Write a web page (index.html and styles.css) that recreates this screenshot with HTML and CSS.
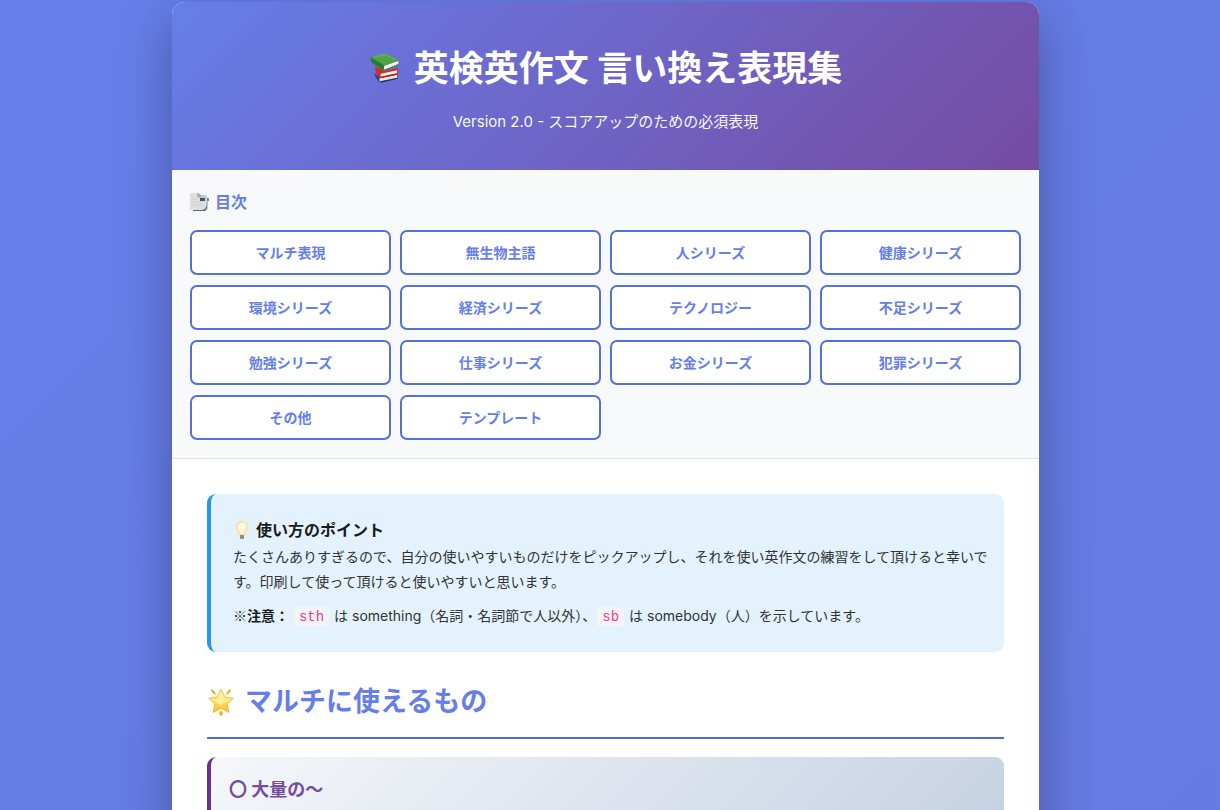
FILE: index.html
```html
<!DOCTYPE html>
<html lang="ja">
<head>
  <meta charset="UTF-8">
  <meta name="viewport" content="width=device-width, initial-scale=1.0">
  <title>英検英作文 言い換え表現集</title>
  <link rel="stylesheet" href="styles.css">
</head>
<body>
  <div class="container">
    <header class="header">
      <h1>
        <svg class="icon-books" viewBox="15 18 96 96" aria-hidden="true">
          <path d="M31 80l16 14 53-10v14l-51 11q-7-2-10-9-7-8-8-20z" fill="#363c8d"/>
          <path d="M48 96l51-10v10l-51 11q-4-6 0-11z" fill="#e9e4dc"/>
          <path d="M48 106l53-11v3l-50 12z" fill="#2a2d70"/>
          <path d="M33 61l28 15 40-11v21l-50 10q-6-1-11-9-7-12-7-26z" fill="#d52b1e"/>
          <path d="M51 83l48-10v9l-48 10q-4-4 0-9z" fill="#f4eee6"/>
          <path d="M51 92l50-10v3l-50 11z" fill="#a51c14"/>
          <path d="M21 34q-2 10 3 16l36 24 3-17z" fill="#2c7a2c"/>
          <path d="M61 59l42-14v9L62 71q-5-5-1-12z" fill="#f6f5ee"/>
          <path d="M61 71l43-17v3L62 75z" fill="#2b8b2b"/>
          <path d="M21 34l41-12 44 20-44 17z" fill="#4fa546"/>
          <path d="M28 35l34-10 33 16" fill="none" stroke="#72c45f" stroke-width="2"/>
        </svg>
        英検英作文 言い換え表現集
      </h1>
      <p>Version 2.0 - スコアアップのための必須表現</p>
    </header>

    <nav class="toc">
      <h2>
        <svg class="icon-tabs" viewBox="0 0 20 20" aria-hidden="true">
          <path d="M4 3h12l2 3v11l-2 2H4z" fill="#c9cbcd"/>
          <path d="M17 6h2v3h-2z" fill="#4b93e0"/>
          <path d="M17 10h1v3h-1z" fill="#8bbbe8"/>
          <path d="M0 1h8l2 4 6 2v7l-2 4H0z" fill="#dedfe0"/>
          <path d="M7 1l3 1 2 4-5-1z" fill="#aaadb0"/>
          <path d="M10 6h5v3h-5z" fill="#4e5356"/>
          <path d="M2 7h5M2 10h7M2 13h10" stroke="#cdcfd0" fill="none"/>
          <path d="M3 19h12l2-3v-4l-1 4-3 2H3z" fill="#606468"/>
        </svg>
        目次
      </h2>
      <div class="toc-grid">
        <a href="#multi">マルチ表現</a>
        <a href="#inanimate">無生物主語</a>
        <a href="#people">人シリーズ</a>
        <a href="#health">健康シリーズ</a>
        <a href="#environment">環境シリーズ</a>
        <a href="#economy">経済シリーズ</a>
        <a href="#technology">テクノロジー</a>
        <a href="#lack">不足シリーズ</a>
        <a href="#study">勉強シリーズ</a>
        <a href="#work">仕事シリーズ</a>
        <a href="#money">お金シリーズ</a>
        <a href="#crime">犯罪シリーズ</a>
        <a href="#others">その他</a>
        <a href="#template">テンプレート</a>
      </div>
    </nav>

    <main class="content">
      <div class="info-box">
        <h3>
          <svg class="icon-bulb" viewBox="0 0 18 20" aria-hidden="true">
            <path d="M9 1C5 1 3 4 3 7c0 3 2 5 3 8h6c1-3 3-5 3-8 0-3-2-6-6-6z" fill="#fbe9a9" stroke="#e6dcbc" stroke-width=".6"/>
            <path d="M9 3C6 3 5 5 5 7s2 4 3 6h2c1-2 3-4 3-6s-1-4-4-4z" fill="#fffbe2"/>
            <path d="M7 15h4v3l-1 1H8l-1-1z" fill="#aaa59b"/>
            <path d="M7 16h4M7 18h4" stroke="#6d6b68" stroke-width=".8"/>
          </svg>
          使い方のポイント
        </h3>
        <p>たくさんありすぎるので、自分の使いやすいものだけをピックアップし、それを使い英作文の練習をして頂けると幸いです。印刷して使って頂けると使いやすいと思います。</p>
        <p class="note"><span class="mark">※</span><strong>注意：</strong> <code>sth</code> は something（名詞・名詞節で人以外）、<code>sb</code> は somebody（人）を示しています。</p>
      </div>

      <section id="multi">
        <h2 class="section-title">
          <svg class="icon-star" viewBox="0 0 28 28" aria-hidden="true">
            <defs>
              <linearGradient id="gold" x1="0" y1="0" x2="0" y2="1">
                <stop offset="0" stop-color="#fff2a0"/>
                <stop offset=".5" stop-color="#ffe45c"/>
                <stop offset="1" stop-color="#f7b52c"/>
              </linearGradient>
            </defs>
            <path d="M14 1l3.900 8 8.600 1.200-6.300 5.900 1.800 8.400L14 20.400l-8 4.100 1.800-8.400-6.300-5.900L10.100 9z" fill="url(#gold)" stroke="#f0b437" stroke-width=".8" stroke-linejoin="round"/>
            <path d="M14 4l2 7 7 1-6 3-3 3-3-3-6-3 7-1z" fill="#fffac8" opacity=".6"/>
            <path d="M4 1q4 1 5 6-5-2-5-6zM24 1q-4 1-5 6 5-2 5-6zM14 22.500q4 3 0 5.500-4-2.500 0-5.500z" fill="#f2b02c"/>
          </svg>
          マルチに使えるもの
        </h2>
        <div class="card">
          <h3>〇 大量の〜</h3>
        </div>
      </section>
    </main>
  </div>
</body>
</html>
```
FILE: styles.css
```css
* {
  margin: 0;
  padding: 0;
  box-sizing: border-box;
}

body {
  font-family: Inter, "Noto Sans CJK JP", sans-serif;
  font-size: 14px;
  line-height: 25px;
  color: #333;
  background: linear-gradient(135deg, #667eea 0%, #667ae2 100%);
  padding: 2px 9px 0 0;
}

svg {
  flex: none;
}

.container {
  max-width: 867px;
  margin: 0 auto;
  background: #fff;
  border-radius: 13px 13px 0 0;
  box-shadow: 0 17px 52px rgba(0, 0, 0, 0.3);
  overflow: hidden;
}

.header {
  background: linear-gradient(135deg, #667eea 0%, #764ba2 100%);
  color: #fff;
  padding: 35px;
  text-align: center;
}

.header h1 {
  display: flex;
  justify-content: center;
  align-items: center;
  gap: 13px;
  font-size: 35px;
  line-height: 62px;
  margin-bottom: 9px;
}

.header p {
  font-size: 15px;
  line-height: 27px;
  opacity: 0.95;
}

.icon-books {
  width: 32px;
  height: 32px;
}

.toc {
  background: #f8f9fb;
  padding: 18px;
  border-bottom: 1px solid #dee2e6;
}

.toc h2 {
  display: flex;
  align-items: center;
  gap: 5px;
  color: #667eea;
  font-size: 16px;
  line-height: 28px;
  margin-bottom: 14px;
}

.icon-tabs {
  width: 20px;
  height: 20px;
}

.toc-grid {
  display: grid;
  grid-template-columns: repeat(auto-fit, minmax(174px, 1fr));
  gap: 10px 9px;
}

.toc-grid a {
  padding: 8px;
  background: #fff;
  border: 2px solid #5570d8;
  border-radius: 7px;
  color: #667eea;
  font-weight: bold;
  text-align: center;
  text-decoration: none;
}

.toc-grid a:hover {
  background: #667eea;
  color: #fff;
}

.content {
  padding: 35px;
}

.info-box {
  background: #e3f2fd;
  border-left: 4px solid #2196f3;
  border-radius: 9px;
  padding: 22px 10px 22px 22px;
  margin-bottom: 26px;
}

.info-box h3 {
  display: flex;
  align-items: center;
  gap: 5px;
  color: #1a1a1a;
  font-size: 16px;
  line-height: 28px;
}

.icon-bulb {
  width: 18px;
  height: 20px;
}

.note {
  margin-top: 9px;
}

.note strong {
  color: #1a1a1a;
}

.mark {
  font-family: "Noto Sans CJK JP", sans-serif;
}

code {
  background: #f4f4f6;
  border-radius: 3px;
  color: #e83e8c;
  font-family: "Liberation Mono", monospace;
  font-size: 14px;
  padding: 2px 5px;
  margin: 0 1px;
}

.section-title {
  display: flex;
  align-items: center;
  gap: 10px;
  color: #667eea;
  font-size: 27px;
  line-height: 48px;
  padding-bottom: 11px;
  border-bottom: 2px solid #526bdc;
  margin-bottom: 18px;
}

.icon-star {
  width: 28px;
  height: 28px;
}

.card {
  min-height: 120px;
  background: linear-gradient(135deg, #f5f7fa 0%, #c3cfe2 100%);
  border-left: 4px solid #66318f;
  border-radius: 9px;
  padding: 18px;
}

.card h3 {
  color: #764ba2;
  font-size: 18px;
  line-height: 30px;
}
```
